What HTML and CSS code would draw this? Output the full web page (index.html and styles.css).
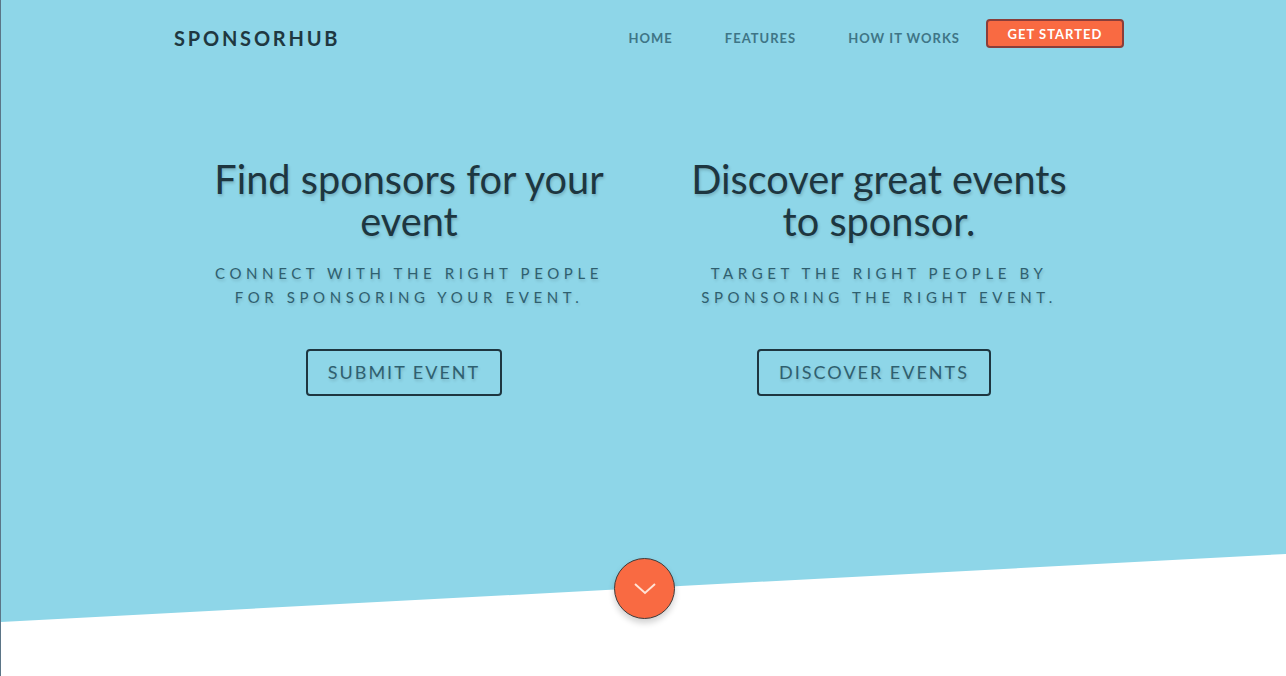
FILE: index.html
```html
<!DOCTYPE html>
<html lang="en">
<head>
<meta charset="utf-8">
<title>SponsorHub</title>
<link rel="stylesheet" href="styles.css">
</head>
<body>
<div class="page">
  <section class="hero">
    <header class="topbar">
      <div class="brand">SPONSORHUB</div>
      <nav class="nav">
        <a class="nav-link" href="#">HOME</a>
        <a class="nav-link" href="#">FEATURES</a>
        <a class="nav-link" href="#">HOW IT WORKS</a>
        <a class="nav-cta" href="#">GET STARTED</a>
      </nav>
    </header>
    <div class="columns">
      <div class="col">
        <h1 class="title">Find sponsors for your event</h1>
        <p class="subtitle">CONNECT WITH THE RIGHT PEOPLE<br>FOR SPONSORING YOUR EVENT.</p>
        <a class="ghost-btn" href="#">SUBMIT EVENT</a>
      </div>
      <div class="col">
        <h1 class="title">Discover great events<br>to sponsor.</h1>
        <p class="subtitle">TARGET THE RIGHT PEOPLE BY<br>SPONSORING THE RIGHT EVENT.</p>
        <a class="ghost-btn" href="#">DISCOVER EVENTS</a>
      </div>
    </div>
  </section>
  <a class="scroll-down" href="#">
    <svg width="24" height="14" viewBox="0 0 24 14"><path d="M2 2 L12 11 L22 2" fill="none" stroke="#ffe3d6" stroke-width="2"/></svg>
  </a>
</div>
</body>
</html>
```
FILE: styles.css
```css
* { box-sizing: border-box; }
html, body { margin: 0; padding: 0; }
body {
  font-family: Lato, "Open Sans", "Liberation Sans", sans-serif;
  background: #ffffff;
  width: 1286px;
  height: 676px;
  overflow: hidden;
}
.page {
  position: relative;
  height: 676px;
  border-left: 1px solid #5b7587;
}
.hero {
  background: #8ed6e8;
  height: 622px;
  clip-path: polygon(0 0, 100% 0, 100% 554px, 0 100%);
  padding-top: 19px;
}
.topbar {
  width: 950px;
  margin-left: 173px;
  display: flex;
  align-items: flex-start;
  justify-content: space-between;
}
.brand {
  font-size: 20px;
  font-weight: 700;
  letter-spacing: 2.8px;
  color: #1f3841;
  padding-top: 7px;
  line-height: 24px;
}
.nav {
  display: flex;
  align-items: flex-start;
}
.nav-link {
  font-size: 13px;
  font-weight: 700;
  letter-spacing: 1px;
  color: #3e7586;
  text-decoration: none;
  line-height: 16px;
  margin-top: 11px;
  margin-right: 52px;
}
.nav-link:nth-child(3) { margin-right: 26px; }
.nav-cta {
  display: block;
  width: 138px;
  height: 29px;
  background: #f96a42;
  border: 2px solid #8a3e3a;
  border-radius: 4px;
  color: #ffffff;
  font-size: 13px;
  font-weight: 700;
  letter-spacing: 1px;
  text-align: center;
  line-height: 27px;
  text-decoration: none;
}
.columns {
  display: flex;
  width: 940px;
  margin-left: 173px;
  margin-top: 108px;
}
.col {
  width: 470px;
  display: flex;
  flex-direction: column;
  align-items: center;
  text-align: center;
}
.title {
  margin: 0;
  font-size: 39.7px;
  font-weight: 400;
  line-height: 42px;
  color: #1d3640;
  text-shadow: 1px 2px 3px rgba(0, 0, 0, 0.18);
  width: 400px;
}
.subtitle {
  margin: 19px 0 0;
  font-size: 15px;
  line-height: 24px;
  letter-spacing: 4.6px;
  color: #2f5f6f;
  text-shadow: 1px 2px 3px rgba(0, 0, 0, 0.15);
}
.ghost-btn {
  margin-top: 40px;
  margin-right: 10px;
  display: inline-block;
  height: 47px;
  padding: 0 20px;
  border: 2px solid #1e3640;
  border-radius: 4px;
  font-size: 18px;
  letter-spacing: 2px;
  line-height: 43px;
  color: #2f5f6f;
  text-decoration: none;
  text-shadow: 1px 2px 3px rgba(0, 0, 0, 0.15);
}
.scroll-down {
  position: absolute;
  left: 613px;
  top: 558px;
  width: 61px;
  height: 61px;
  border-radius: 50%;
  background: #f96a42;
  border: 1px solid #3c3c3c;
  box-shadow: 0 4px 6px rgba(0, 0, 0, 0.18);
  display: flex;
  align-items: center;
  justify-content: center;
}
```
